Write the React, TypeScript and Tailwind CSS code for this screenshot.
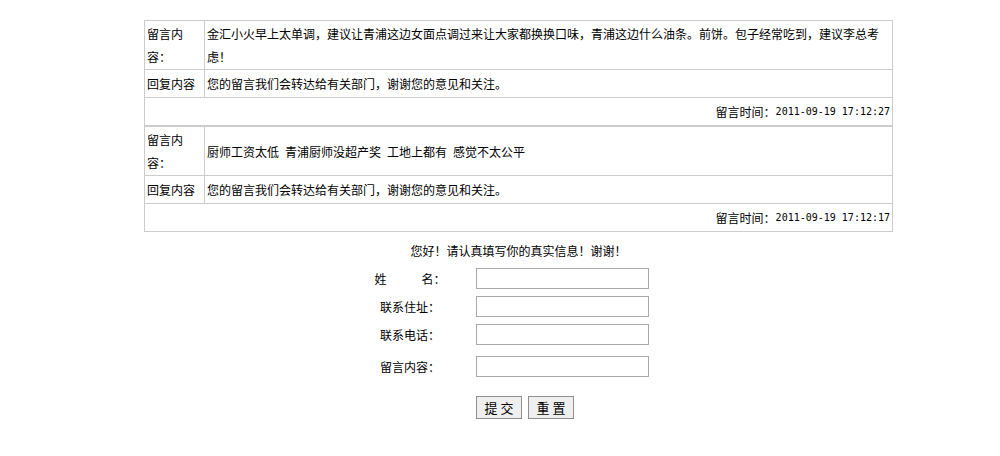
import React from 'react'

const FONT = "font-['SimSun','Noto_Sans_CJK_SC',sans-serif]"

type Message = {
  content: React.ReactNode
  reply: string
  time: string
}

const Gap = () => <span className="inline-block w-[6px]" />

const MESSAGES: Message[] = [
  {
    content:
      '金汇小火早上太单调，建议让青浦这边女面点调过来让大家都换换口味，青浦这边什么油条。前饼。包子经常吃到，建议李总考虑！',
    reply: '您的留言我们会转达给有关部门，谢谢您的意见和关注。',
    time: '2011-09-19 17:12:27',
  },
  {
    content: (
      <>
        厨师工资太低<Gap />青浦厨师没超产奖<Gap />工地上都有<Gap />感觉不太公平
      </>
    ),
    reply: '您的留言我们会转达给有关部门，谢谢您的意见和关注。',
    time: '2011-09-19 17:12:17',
  },
]

function MessageTable({ msg }: { msg: Message }) {
  return (
    <div className="border border-[#cccccc] text-[12px] text-black">
      <div className="flex h-[48px]">
        <div className="w-[60px] shrink-0 border-r border-[#cccccc] pl-[2px] pr-[1px] leading-[23px] flex items-center">
          <span>留言内容：</span>
        </div>
        <div className="flex-1 pl-[2px] pr-[5px] leading-[23px] flex items-center">
          <span>{msg.content}</span>
        </div>
      </div>
      <div className="flex h-[28px] border-t border-[#cccccc]">
        <div className="w-[60px] shrink-0 border-r border-[#cccccc] pl-[2px] flex items-center whitespace-nowrap">
          回复内容
        </div>
        <div className="flex-1 pl-[2px] flex items-center">{msg.reply}</div>
      </div>
      <div className="flex h-[28px] border-t border-[#cccccc] items-center justify-end pr-[2px]">
        <span>留言时间：</span>
        <span className="font-['DejaVu_Sans_Mono','Liberation_Mono',monospace] text-[10px]">{msg.time}</span>
      </div>
    </div>
  )
}

function Field({ label, className = '' }: { label: React.ReactNode; className?: string }) {
  return (
    <div className={`flex items-center ${className}`}>
      <div className="w-[100px] text-center text-[12px] leading-[21px]">{label}</div>
      <input
        type="text"
        className="ml-[16px] w-[173px] h-[21px] border border-[#a9a9a9] bg-white px-1 text-[12px] outline-none"
      />
    </div>
  )
}

export default function App() {
  return (
    <div className={`${FONT} w-[1000px] h-[456px] bg-white text-black overflow-hidden`}>
      <div className="ml-[144px] w-[749px] pt-[20px]">
        {MESSAGES.map((m, i) => (
          <MessageTable key={i} msg={m} />
        ))}

        <div className="mt-[7px] text-center text-[12px] leading-[23px]">
          您好！请认真填写你的真实信息！谢谢！
        </div>

        <form className="ml-[216px] mt-[6px] flex flex-col" onSubmit={(e) => e.preventDefault()}>
          <Field
            label={
              <>
                姓<span className="inline-block w-[35px]" />名：
              </>
            }
          />
          <Field label="联系住址：" className="mt-[7px]" />
          <Field label="联系电话：" className="mt-[7px]" />
          <Field label="留言内容：" className="mt-[11px]" />
          <div className="ml-[116px] mt-[19px] flex gap-[6px]">
            <button
              type="submit"
              className="w-[46px] h-[23px] border border-[#8f8f8f] bg-[#efefef] text-[13px] leading-none"
            >
              提 交
            </button>
            <button
              type="reset"
              className="w-[46px] h-[23px] border border-[#8f8f8f] bg-[#efefef] text-[13px] leading-none"
            >
              重 置
            </button>
          </div>
        </form>
      </div>
    </div>
  )
}
